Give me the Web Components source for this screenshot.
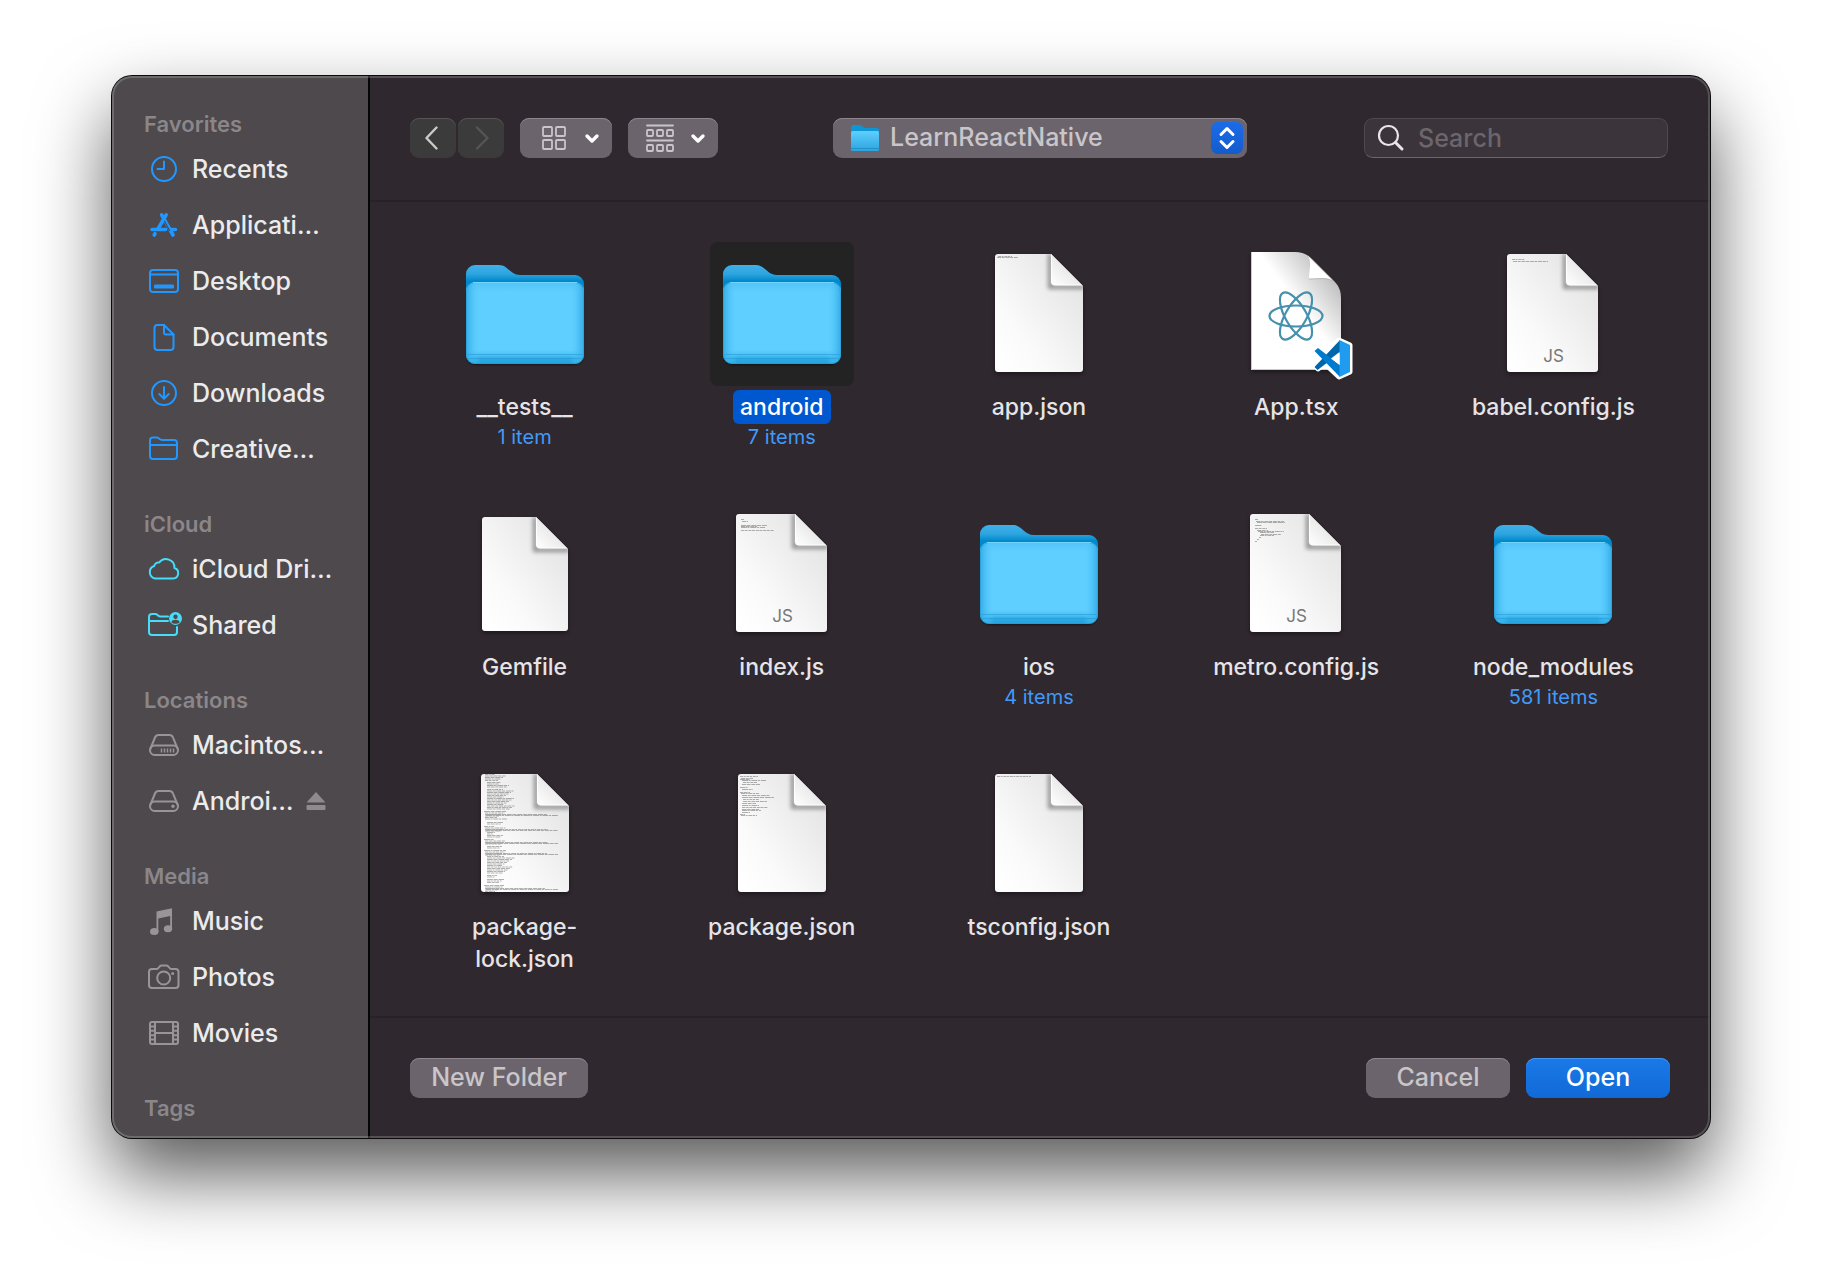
<!DOCTYPE html>
<html lang="en">
<head>
<meta charset="utf-8">
<title>Open</title>
<style>
  html { background: #fff; }
  body {
    box-sizing: border-box;
    min-height: 100vh;
    margin: 0;
    padding: 76px 112px 148px;
    color: #ecebec;
    font-family: Inter, "Liberation Sans", sans-serif;
    font-weight: 500;
    --panel: #2f282f;
    --sidebar: #4d494c;
    --control: #6b646c;
    --rule: #252326;
    --blue: #2297ff;
    --cyan: #47dcfa;
    --gray: #98959a;
  }
</style>
</head>
<body>
<file-dialog>
  <side-bar slot="sidebar">
    <side-section heading="Favorites">
      <side-item icon="clock" tint="blue">Recents</side-item>
      <side-item icon="apps" tint="blue">Applicati…</side-item>
      <side-item icon="desktop" tint="blue">Desktop</side-item>
      <side-item icon="doc" tint="blue">Documents</side-item>
      <side-item icon="download" tint="blue">Downloads</side-item>
      <side-item icon="folder" tint="blue">Creative…</side-item>
    </side-section>
    <side-section heading="iCloud">
      <side-item icon="cloud" tint="cyan">iCloud Dri…</side-item>
      <side-item icon="shared" tint="cyan">Shared</side-item>
    </side-section>
    <side-section heading="Locations">
      <side-item icon="disk" tint="gray">Macintos…</side-item>
      <side-item icon="external" tint="gray" eject>Androi…</side-item>
    </side-section>
    <side-section heading="Media">
      <side-item icon="music" tint="gray">Music</side-item>
      <side-item icon="camera" tint="gray">Photos</side-item>
      <side-item icon="film" tint="gray">Movies</side-item>
    </side-section>
    <side-section heading="Tags"></side-section>
  </side-bar>
  <tool-bar slot="toolbar"></tool-bar>
  <file-grid slot="files">
    <file-item kind="folder" note="1 item">__tests__</file-item>
    <file-item kind="folder" note="7 items" selected>android</file-item>
    <file-item kind="json" code="app">app.json</file-item>
    <file-item kind="tsx">App.tsx</file-item>
    <file-item kind="js" code="babel">babel.config.js</file-item>
    <file-item kind="blank">Gemfile</file-item>
    <file-item kind="js" code="index">index.js</file-item>
    <file-item kind="folder" note="4 items">ios</file-item>
    <file-item kind="js" code="metro">metro.config.js</file-item>
    <file-item kind="folder" note="581 items">node_modules</file-item>
    <file-item kind="json" code="lock">package-<br>lock.json</file-item>
    <file-item kind="json" code="package">package.json</file-item>
    <file-item kind="json" code="tsconfig">tsconfig.json</file-item>
  </file-grid>
  <action-bar slot="actions">
    <push-button slot="start" width="wide">New Folder</push-button>
    <push-button>Cancel</push-button>
    <push-button primary>Open</push-button>
  </action-bar>
</file-dialog>

<script>
const shadow = (el, html) => { el.attachShadow({ mode: 'open' }).innerHTML = html; };

const ICONS = {
  clock: '<circle cx="18" cy="16" r="12"/><path d="M18 8.500V16h-6.500"/>',
  apps: '<g stroke-width="3.600"><path d="M15.600 5.800 24.800 22M20.200 5.800 12.200 19.500M6 20.500h13.500M25 20.500h4.500"/><path d="m8.200 26 .8-1.300M25.300 23l1.700 3"/></g><path d="m18.600 12.500 4.900 9" stroke="var(--sidebar)" stroke-width="1.200"/>',
  desktop: '<rect x="4" y="5" width="28" height="22" rx="3"/><path d="M4 9.500h28"/><rect x="8" y="19.500" width="20" height="4" rx="1" fill="currentColor" stroke="none"/>',
  doc: '<path d="M11.500 4H18l9.500 9.500V26a3 3 0 0 1-3 3h-13a3 3 0 0 1-3-3V7a3 3 0 0 1 3-3Z"/><path d="M18 4v7.500a2 2 0 0 0 2 2h7.500"/>',
  download: '<circle cx="18" cy="16" r="12"/><path d="M18 10v11.500M13.300 17l4.700 4.700 4.700-4.700"/>',
  folder: '<path d="M4 12V7.500a3 3 0 0 1 3-3h3.500c2.500 0 3 2.500 5.500 2.500h12a3 3 0 0 1 3 3v13a3 3 0 0 1-3 3H7a3 3 0 0 1-3-3V12h27"/>',
  cloud: '<path d="M9 25.500a6.500 6.500 0 0 1-.8-12.500 4.500 4.500 0 0 1 5-3.500 8.500 8.500 0 0 1 15.300 5.500 5.400 5.400 0 0 1-1.300 10.500Z"/>',
  shared: '<path d="M22 12H3M22 7.500h-7.500c-2.500 0-3-2.500-5-2.500H6a3 3 0 0 0-3 3v15a3 3 0 0 0 3 3h22a3 3 0 0 0 3-3v-5"/><circle cx="29.500" cy="9.500" r="6.500" fill="currentColor" stroke="none"/><g fill="var(--sidebar)" stroke="none"><circle cx="29.500" cy="7.700" r="2.200"/><path d="M25.300 13.200c.5-3.300 7.900-3.300 8.400 0-2 2.200-6.400 2.200-8.400 0Z"/></g>',
  disk: '<path d="M4.500 19.500 9 8.500C9.700 6.700 10.500 6 12.500 6h11c2 0 2.800.7 3.500 2.500l4.500 11"/><rect x="4" y="16.500" width="28" height="9.500" rx="4.700"/><path d="M15.500 19.500v4M18.500 19.500v4M21.500 19.500v4M24.500 19.500v4M27.500 19.500v4" stroke-width="1.500" stroke-linecap="butt"/>',
  external: '<path d="M4.500 19.500 9 8.500C9.700 6.700 10.500 6 12.500 6h11c2 0 2.800.7 3.500 2.500l4.500 11"/><rect x="4" y="16.500" width="28" height="9.500" rx="4.700"/><circle cx="27" cy="21.200" r="1.700" fill="currentColor" stroke="none"/>',
  music: '<g fill="currentColor" stroke="none"><path d="M10.500 6.500 26 3.200v21h-1.800V11L12.300 13.500v13h-1.800Z"/><ellipse cx="8.300" cy="26.500" rx="4.300" ry="3.500"/><ellipse cx="22" cy="23.800" rx="4.200" ry="3.500"/></g>',
  camera: '<path d="M6 8h5c1.500 0 2.300-3.500 4.500-3.500h5C22.700 4.500 23.500 8 25 8h4.500a3 3 0 0 1 3 3v13a3 3 0 0 1-3 3H6a3 3 0 0 1-3-3V11a3 3 0 0 1 3-3Z"/><circle cx="17.700" cy="17" r="6.500"/><circle cx="26.700" cy="12.500" r="1.500" fill="currentColor" stroke="none"/>',
  film: '<rect x="4" y="5" width="28" height="22" rx="2"/><path d="M9 5v22M27 5v22M9 16h18M4 9.500h5M4 13.800h5M4 18.200h5M4 22.500h5M27 9.500h5M27 13.800h5M27 18.200h5M27 22.500h5"/>'
};

/* Miniature code previews: [x, y, length] with y counted from the page's top edge. */
const CODE = {
  app: [[3, 2, 14], [2, 3, 21]],
  tsconfig: [[2, 2, 34]],
  babel: [[5, 5, 13], [6, 7, 35]],
  index: [[5, 5, 3], [6, 7, 6], [5, 11, 26], [5, 13, 24], [5, 16, 33], [5, 12, 16]],
  metro: [[5, 5, 3], [6, 7, 28], [7, 8, 28], [5, 11, 7], [5, 14, 12], [7, 16, 11], [8, 17, 26], [10, 18, 14], [11, 20, 20], [10, 21, 14], [9, 23, 2], [7, 25, 2], [5, 27, 2]],
  package: [[2, 2, 18], [3, 4, 12], [2, 5, 10], [4, 6, 24], [5, 8, 14], [4, 10, 18], [2, 13, 8], [4, 15, 11], [2, 18, 10], [3, 19, 18], [4, 21, 28], [4, 23, 32], [5, 25, 16], [5, 27, 24], [4, 29, 14], [4, 31, 17], [4, 33, 26], [4, 35, 17], [4, 36, 19], [4, 38, 8], [2, 40, 5], [3, 41, 16]],
  lock: []
};
[[0, 7, 0], [8, 14, 4], [15, 35, 5], [37, 46, 1], [48, 50, 2], [52, 57, 1], [58, 63, 2], [65, 71, 1], [72, 74, 2], [76, 81, 1], [82, 100, 5], [101, 103, 2], [105, 109, 4], [111, 118, 1]].forEach(([from, to, kind]) => {
  for (let y = from; y < to; y += 1.500) {
    const wave = (y * 7) % 13;
    CODE.lock.push([kind === 1 && y === from ? 3 : 4 + (kind > 1 ? 2 : 0), y, (kind === 2 ? 5 : 10) + wave + (kind === 5 ? 5 : 0)]);
    if (kind === 1 && y === from + 3) CODE.lock.push([5, y, 54 + wave], [5, y + 1, 72]);
  }
});

const lines = (key, left, top) => (CODE[key] || []).map(([x, y, n], i) =>
  `<path d="M${left + x} ${top + y + .5}h${n}" stroke-dasharray="${3 + i % 4} .6 ${2 + i % 3} .8"/>`).join('');

const page = (x, y, w, h, code, tag) => `
  <defs>
    <linearGradient id="paper" x1="1" y1=".15" x2=".1" y2="1"><stop offset="0" stop-color="#e2e2e2"/><stop offset=".7" stop-color="#fafafa"/><stop offset="1" stop-color="#fff"/></linearGradient>
    <linearGradient id="flap" x1="0" y1="1" x2=".6" y2=".4"><stop offset="0" stop-color="#fff"/><stop offset="1" stop-color="#e6e6e6"/></linearGradient>
    <filter id="soft" x="-30%" y="-30%" width="160%" height="160%"><feGaussianBlur stdDeviation="2"/></filter>
    <clipPath id="sheet"><path id="outline" d="M${x + 3} ${y}H${x + w - 32}L${x + w} ${y + 32}V${y + h - 3}a3 3 0 0 1-3 3H${x + 3}a3 3 0 0 1-3-3V${y + 3}a3 3 0 0 1 3-3Z"/></clipPath>
  </defs>
  <use href="#outline" y="2" opacity=".4" filter="url(#soft)"/>
  <use href="#outline" fill="url(#paper)"/>
  <g clip-path="url(#sheet)">
    <g stroke="#555" stroke-width=".9" opacity=".5">${lines(code, x, y)}</g>
    <path d="M${x + w - 33} ${y}v33h34" fill="none" stroke="#000" stroke-width="4" opacity=".4" filter="url(#soft)"/>
    <path d="M${x + w - 31.500} ${y}v28a3 3 0 0 0 3 3H${x + w}Z" fill="url(#flap)" stroke="#fff"/>
  </g>
  ${tag ? `<text x="${x + w / 2 + 1}" y="${y + 108}" text-anchor="middle" font-size="17" font-weight="400" fill="#777">${tag}</text>` : ''}`;

const ORBIT = '<ellipse cx="72" cy="74" rx="26.500" ry="10.500"/>';
const ART = {
  folder: () => `
    <defs>
      <linearGradient id="back" x1="0" y1="0" x2="0" y2="1"><stop offset="0" stop-color="#3fb0e8"/><stop offset=".1" stop-color="#2ea5e0"/><stop offset=".18" stop-color="#0088cc"/><stop offset="1" stop-color="#209fdc"/></linearGradient>
      <linearGradient id="side" x1="0" y1="0" x2="1" y2="0"><stop offset="0" stop-color="#35aee8"/><stop offset=".12" stop-color="#5fcfff" stop-opacity="0"/><stop offset=".88" stop-color="#5fcfff" stop-opacity="0"/><stop offset="1" stop-color="#35aee8"/></linearGradient>
      <linearGradient id="front" x1="0" y1="0" x2="0" y2="1"><stop offset="0" stop-color="#52c3f7"/><stop offset=".12" stop-color="#5fcfff"/><stop offset=".83" stop-color="#5fcfff"/><stop offset=".9" stop-color="#49bdf1"/><stop offset=".93" stop-color="#2eabe5"/><stop offset="1" stop-color="#22a2de"/></linearGradient>
      <filter id="soft" x="-10%" y="-10%" width="120%" height="120%"><feGaussianBlur stdDeviation="1.200"/></filter>
    </defs>
    <rect x="14" y="44" width="116" height="79" rx="9" opacity=".5" filter="url(#soft)"/>
    <path d="M13 32a9 9 0 0 1 9-9h24c9 0 11 10 21 10h55a9 9 0 0 1 9 9v70H13Z" fill="url(#back)"/>
    <rect x="13" y="40" width="118" height="82" rx="9" fill="url(#front)"/>
    <rect x="13.500" y="40.500" width="117" height="81" rx="8.500" fill="url(#side)" stroke="#2399d2" stroke-opacity=".7"/>
    <path d="M20 40.500h104" stroke="#72d4fd"/>
    <path d="M14 112.500h116M15 116.500h114" stroke="#249cd8" stroke-opacity=".6"/>`,
  json: code => page(28, 12, 88, 118, code),
  js: code => page(26, 12, 91, 118, code, 'JS'),
  blank: () => page(29, 15, 86, 114),
  tsx: () => `
    <defs>
      <linearGradient id="curl" x1="0" y1="1" x2=".9" y2=".1"><stop offset=".6" stop-color="#fff"/><stop offset="1" stop-color="#b5b5b5"/></linearGradient>
      <filter id="soft"><feGaussianBlur stdDeviation="2"/></filter>
    </defs>
    <path d="M27 12h44l46 46v72H27Z" opacity=".4" filter="url(#soft)"/>
    <path d="M27 10h44c7 0 12 2 17 7l22 22c5 5 7 10 7 18v71H27Z" fill="url(#curl)"/>
    <path d="M84 14c4 6 1 14 1 23 9 0 17-2 24 2Z" fill="#fff"/>
    <path d="M85 37c9 0 17-2 24 2" fill="none" stroke="#aaa" stroke-width=".8"/>
    <path d="M27.500 10v117.500H117" fill="none" stroke="#ccc"/>
    <g fill="none" stroke="#4590ad" stroke-width="2.200">${ORBIT}<g transform="rotate(60 72 74)">${ORBIT}</g><g transform="rotate(120 72 74)">${ORBIT}</g></g>
    <g stroke-linejoin="round">
      <path d="m115 98 11 5v27l-11 5-14-13-7 5-3-3 7-8-7-8 3-3 7 5Z" fill="#fff" stroke="#fff" stroke-width="5"/>
      <path d="m90.500 125 3 3 22.500-17V98Z" fill="#0065a9"/>
      <path d="m90.500 109 3.500-3 22 17v12Z" fill="#007acc"/>
      <path d="m115.500 98 10.500 5v27l-10.500 5Z" fill="#1f9cf0"/>
      <path d="m115.500 110-8.500 6.500 8.500 6.500Z" fill="#fff"/>
    </g>`
};

const MINI_FOLDER = `<svg class="folder" width="30" height="28" aria-hidden="true">
  <defs><linearGradient id="mini" x1="0" y1="0" x2="0" y2="1"><stop offset="0" stop-color="#5fcfff"/><stop offset="1" stop-color="#2ba4de"/></linearGradient></defs>
  <path d="M1 3a2 2 0 0 1 2-2h7c2 0 3 3 5 3h12a2 2 0 0 1 2 2v20H1Z" fill="#0d96d6"/>
  <rect x="1" y="7" width="28" height="20" rx="1.500" fill="url(#mini)"/><path d="M1 24.500h28" stroke="#2391c6"/></svg>`;

class FileDialog extends HTMLElement {
  constructor() {
    super();
    shadow(this, `<style>
      :host { display: flex; position: relative; min-height: calc(100vh - 224px); border-radius: 20px; background: var(--panel); box-shadow: 0 0 0 1px #0b0b0b, 0 36px 76px rgba(0,0,0,.66); }
      :host::after { content: ""; position: absolute; inset: 0; border-radius: inherit; box-shadow: inset 0 0 0 2px rgba(255,255,255,.19); pointer-events: none; }
      aside { flex: 0 0 256px; border-right: 2px solid #060606; background: var(--sidebar); border-radius: 20px 0 0 20px; }
      main { flex: 1; min-width: 0; display: flex; flex-direction: column; }
      header { border-bottom: 2px solid var(--rule); }
      section { flex: 1; }
      footer { border-top: 2px solid var(--rule); }
    </style>
    <aside><slot name="sidebar"></slot></aside>
    <main><header><slot name="toolbar"></slot></header><section><slot name="files"></slot></section><footer><slot name="actions"></slot></footer></main>`);
  }
}

class SideBar extends HTMLElement {
  constructor() {
    super();
    shadow(this, `<style>
      :host { display: block; padding: 31px 0 12px; }
      nav { display: flex; flex-direction: column; gap: 30px; }
    </style><nav><slot></slot></nav>`);
  }
}

class SideSection extends HTMLElement {
  constructor() {
    super();
    shadow(this, `<style>
      :host { display: block; }
      h2 { margin: 0; padding-left: 32px; font-size: 22px; line-height: 34px; font-weight: 600; color: #8b868a; }
    </style><h2>${this.getAttribute('heading')}</h2><slot></slot>`);
  }
}

class SideItem extends HTMLElement {
  constructor() {
    super();
    const eject = this.hasAttribute('eject')
      ? '<button aria-label="Eject"><svg width="20" height="20"><path d="M10 1 19.500 11.500H.5Z"/><rect x=".5" y="14" width="19" height="5" rx="1"/></svg></button>' : '';
    shadow(this, `<style>
      :host { display: flex; align-items: center; gap: 12px; height: 56px; padding-left: 34px; }
      a { display: flex; align-items: center; gap: 10px; color: inherit; text-decoration: none; font-size: 25px; line-height: 32px; white-space: nowrap; }
      a svg { color: var(--${this.getAttribute('tint')}); fill: none; stroke: currentColor; stroke-width: 2; stroke-linecap: round; stroke-linejoin: round; }
      button { display: flex; padding: 0; border: 0; background: none; fill: #8f8a8e; }
    </style>
    <a href="#"><svg width="36" height="32" aria-hidden="true">${ICONS[this.getAttribute('icon')]}</svg><span><slot></slot></span></a>${eject}`);
  }
}

class ToolBar extends HTMLElement {
  constructor() {
    super();
    shadow(this, `<style>
      :host { display: grid; grid-template-columns: 1fr 414px 1fr; align-items: center; padding: 42px 40px; }
      svg { fill: none; stroke-linecap: round; stroke-linejoin: round; }
      .left, .nav { display: flex; }
      .left { gap: 16px; }
      .nav { gap: 2px; }
      button, .popup, .search { box-sizing: border-box; height: 40px; border: 0; border-radius: 9px; }
      button { display: flex; align-items: center; justify-content: center; padding: 0; background: #3b3b3b; box-shadow: inset 0 1px #575457; }
      .nav button { width: 46px; }
      .view { gap: 16px; padding: 0 12px 0 20px; background: var(--control); box-shadow: inset 0 1px #8d868e; }
      .view + .view { padding: 0 12px 0 18px; }
      .popup { display: flex; align-items: center; position: relative; background: var(--control); box-shadow: inset 0 1px #8d868e; }
      .popup select { appearance: none; width: 100%; height: 40px; margin: 0; padding: 0 44px 2px 57px; border: 0; background: none; color: #c9c6c9; font: 500 25px/38px Inter, sans-serif; }
      .popup option { background: var(--control); }
      .popup svg { position: absolute; pointer-events: none; }
      .folder { left: 17px; }
      .stepper { right: 4px; }
      .search { justify-self: end; display: flex; align-items: center; gap: 10px; width: 304px; margin-right: 2px; padding: 0 12px; background: #3b343b; border: 1px solid #504950; border-bottom-color: #6d676d; }
      input { flex: 1; min-width: 0; padding: 0 3px; border: 0; outline: 0; background: none; color: inherit; font: 500 25px/36px Inter, sans-serif; }
      input::placeholder { color: #6c666c; opacity: 1; }
    </style>
    <div class="left">
      <div class="nav">
        <button aria-label="Back"><svg width="16" height="26" stroke="#cbcbcb" stroke-width="2.400"><path d="M11.500 2.500 1.500 13l10 10.500"/></svg></button>
        <button aria-label="Forward" disabled><svg width="16" height="26" stroke="#575457" stroke-width="2.400"><path d="M4 2.500 14.500 13 4 23.500"/></svg></button>
      </div>
      <button class="view" aria-label="Icon view">
        <svg width="28" height="28" stroke="#c9c5ca" stroke-width="1.800"><rect x="3" y="3" width="9" height="9" rx="1"/><rect x="16" y="3" width="9" height="9" rx="1"/><rect x="3" y="16" width="9" height="9" rx="1"/><rect x="16" y="16" width="9" height="9" rx="1"/></svg>
        <svg width="16" height="12" stroke="#fff" stroke-width="3.400"><path d="m3 4 5 5 5-5"/></svg>
      </button>
      <button class="view" aria-label="Group items">
        <svg width="28" height="28" stroke="#c9c5ca" stroke-width="1.800"><path d="M1 1.500h26M1 16.500h26"/><rect x="1" y="6" width="6" height="6" rx="1"/><rect x="11" y="6" width="6" height="6" rx="1"/><rect x="21" y="6" width="6" height="6" rx="1"/><rect x="1" y="21" width="6" height="6" rx="1"/><rect x="11" y="21" width="6" height="6" rx="1"/><rect x="21" y="21" width="6" height="6" rx="1"/></svg>
        <svg width="16" height="12" stroke="#fff" stroke-width="3.400"><path d="m3 4 5 5 5-5"/></svg>
      </button>
    </div>
    <div class="popup">
      <select aria-label="Folder"><option>LearnReactNative</option></select>
      ${MINI_FOLDER}
      <svg class="stepper" width="32" height="32"><defs><linearGradient id="b" x1="0" y1="0" x2="0" y2="1"><stop offset="0" stop-color="#1b6cea"/><stop offset="1" stop-color="#145ccb"/></linearGradient></defs><rect width="32" height="32" rx="7" fill="url(#b)"/><path d="m10 12.500 6-6 6 6M10 19.500l6 6 6-6" stroke="#fff" stroke-width="3"/></svg>
    </div>
    <label class="search">
      <svg width="28" height="28" stroke="#e8e6e8" stroke-width="2.200"><circle cx="11.500" cy="11.500" r="9.500"/><path d="m18.500 18.500 6.500 6.500" stroke-width="3"/></svg>
      <input type="search" placeholder="Search" aria-label="Search">
    </label>`);
  }
}

class FileGrid extends HTMLElement {
  constructor() {
    super();
    shadow(this, `<style>
      :host { display: grid; grid-template-columns: repeat(5, 1fr); gap: 52px 0; padding: 40px 28px 40px 26px; }
    </style><slot></slot>`);
  }
}

class FileItem extends HTMLElement {
  constructor() {
    super();
    const note = this.getAttribute('note');
    shadow(this, `<style>
      :host { display: flex; justify-content: center; }
      button { display: flex; flex-direction: column; align-items: center; justify-content: flex-start; padding: 0; border: 0; background: none; color: #e6e4e6; font-family: inherit; font-weight: 500; }
      .art { display: block; margin-bottom: 4px; border-radius: 8px; }
      .name { padding: 1px 7px; border-radius: 6px; font-size: 23px; line-height: 32px; }
      .note { color: #409afa; font-size: 20px; font-weight: 400; line-height: 26px; }
      :host([selected]) .art { background: #232323; }
      :host([selected]) .name { background: #0058d1; color: #fff; }
    </style>
    <button>
      <svg class="art" width="144" height="144" aria-hidden="true">${ART[this.getAttribute('kind')](this.getAttribute('code'))}</svg>
      <span class="name"><slot></slot></span>
      ${note ? `<span class="note">${note}</span>` : ''}
    </button>`);
  }
}

class ActionBar extends HTMLElement {
  constructor() {
    super();
    shadow(this, `<style>
      :host { display: flex; justify-content: space-between; padding: 40px; }
      div { display: flex; gap: 16px; }
    </style><slot name="start"></slot><div><slot></slot></div>`);
  }
}

class PushButton extends HTMLElement {
  constructor() {
    super();
    shadow(this, `<style>
      :host { display: block; }
      button { display: block; width: 144px; height: 40px; padding: 0 0 2px; border: 0; border-radius: 9px; background: var(--control); box-shadow: inset 0 1px #8d868e; color: #c9c6c9; font: 500 25px/38px Inter, sans-serif; }
      :host([width=wide]) button { width: 178px; }
      :host([primary]) button { background: linear-gradient(#1a7ae8, #1169d6); box-shadow: inset 0 1px #4595ee; color: #fff; }
    </style><button><slot></slot></button>`);
  }
}

customElements.define('file-dialog', FileDialog);
customElements.define('side-bar', SideBar);
customElements.define('side-section', SideSection);
customElements.define('side-item', SideItem);
customElements.define('tool-bar', ToolBar);
customElements.define('file-grid', FileGrid);
customElements.define('file-item', FileItem);
customElements.define('action-bar', ActionBar);
customElements.define('push-button', PushButton);
</script>
</body>
</html>
